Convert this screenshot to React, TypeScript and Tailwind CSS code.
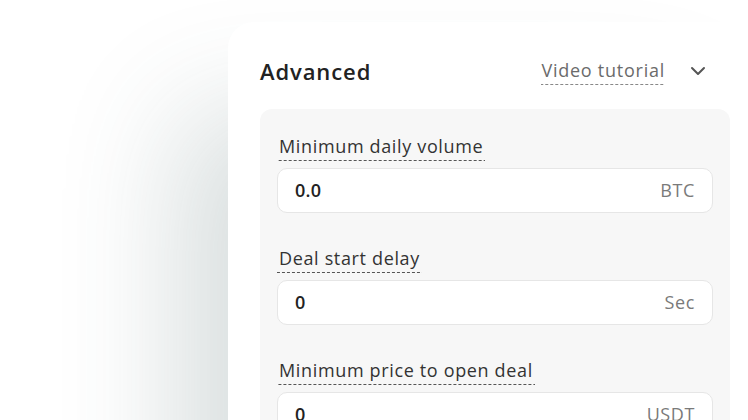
import React from "react";

const dash =
  "bg-[linear-gradient(to_right,#555_60%,transparent_0)] bg-[length:5px_1px] bg-repeat-x bg-bottom";

function Field({ label, value, unit }: { label: string; value: string; unit: string }) {
  return (
    <div className="flex flex-col items-start">
      <span
        className={`inline-block px-[2px] pb-[3px] text-[18px] leading-6 tracking-[0.65px] text-[#333] ${dash}`}
      >
        {label}
      </span>
      <div className="mt-[7px] flex h-[45px] w-full items-center justify-between rounded-[10px] border border-[#e6e6e6] bg-white pl-[17px] pr-[17px]">
        <span className="text-[18px] font-semibold tracking-[0.3px] text-[#222]">{value}</span>
        <span className="text-[18px] tracking-[0.6px] text-[#7a7a7a]">{unit}</span>
      </div>
    </div>
  );
}

export default function App() {
  return (
    <div
      className="relative h-[420px] w-[748px] overflow-hidden bg-white pl-[228px] pt-[22px]"
      style={{ fontFamily: '"Open Sans", "Noto Sans", sans-serif' }}
    >
      <div className="w-[534px] rounded-tl-[26px] rounded-tr-[26px] bg-white px-[32px] pt-[29px] pb-[40px] shadow-[-60px_80px_120px_-10px_rgba(60,90,90,0.2)]">
        <div className="flex h-[40px] items-center justify-between">
          <span className="text-[22px] font-semibold tracking-[0.9px] text-[#222]">Advanced</span>
          <div className="flex items-center">
            <span className="inline-block pb-[3px] text-[18px] leading-6 tracking-[0.75px] text-[#6b6b6b] bg-[linear-gradient(to_right,#888_60%,transparent_0)] bg-[length:5px_1px] bg-repeat-x bg-bottom">
              Video tutorial
            </span>
            <svg
              className="ml-[25px] mr-[24px]"
              width="16"
              height="10"
              viewBox="0 0 16 10"
              fill="none"
              stroke="#555"
              strokeWidth="2"
              strokeLinecap="round"
              strokeLinejoin="round"
            >
              <path d="M2 2l6 6 6-6" />
            </svg>
          </div>
        </div>
        <div className="mt-[18px] flex flex-col gap-[33px] rounded-[12px] bg-[#f7f7f7] px-[17px] pt-[25px] pb-[30px]">
          <Field label="Minimum daily volume" value="0.0" unit="BTC" />
          <Field label="Deal start delay" value="0" unit="Sec" />
          <Field label="Minimum price to open deal" value="0" unit="USDT" />
        </div>
      </div>
    </div>
  );
}
